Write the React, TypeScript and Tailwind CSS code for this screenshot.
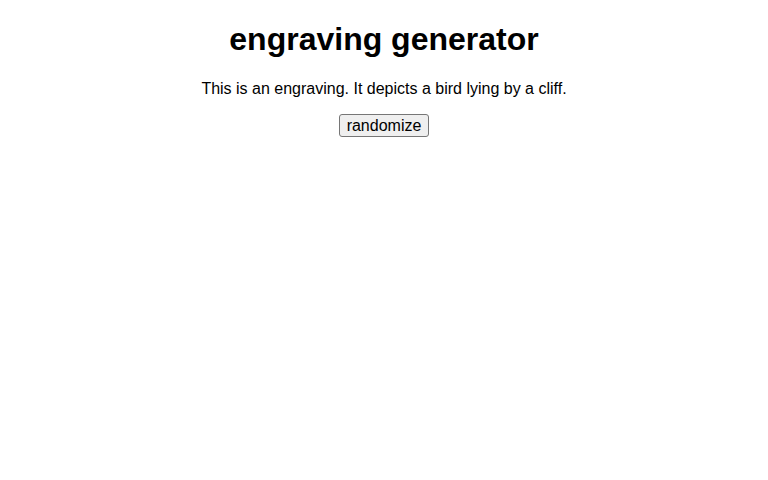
export default function App() {
  return (
    <div className="text-center text-black bg-white min-h-[480px]" style={{ fontFamily: '"Liberation Sans", Arial, sans-serif' }}>
      <h1 className="text-[32px] leading-[normal] font-bold pt-[21.44px] mb-[21.44px]">engraving generator</h1>
      <p className="text-[16px] leading-[normal] mb-[16px]">This is an engraving. It depicts a bird lying by a cliff.</p>
      <button className="text-[16px] leading-[normal] bg-[#efefef] border border-[#767676] rounded-[3px] px-[7px] py-[1.5px] text-black">
        randomize
      </button>
    </div>
  );
}
